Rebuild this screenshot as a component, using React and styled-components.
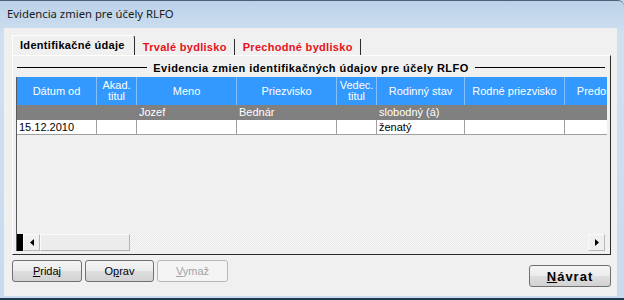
import styled, { createGlobalStyle } from 'styled-components'

const GlobalStyle = createGlobalStyle`
  html, body {
    margin: 0;
    padding: 0;
    background: #c6d9ec;
  }
  * { box-sizing: border-box; }
`

/* --- Window chrome --- */
const Window = styled.div`
  width: 624px;
  height: 300px;
  display: flex;
  flex-direction: column;
  background: linear-gradient(180deg, #bcd2e8 0%, #cfe0f1 12%, #c8dbee 100%);
  border-top: 1px solid #4b6276;
  border-bottom: 2px solid #1f3a4f;
  border-top-right-radius: 6px;
  overflow: hidden;
`

const TitleBar = styled.div`
  height: 27px;
  flex: none;
  display: flex;
  align-items: center;
  padding-left: 7px;
  padding-bottom: 3px;
  font-family: 'Noto Sans', 'DejaVu Sans', sans-serif;
  font-size: 11.3px;
  color: #1b1b1b;
`

const Frame = styled.div`
  flex: 1;
  min-height: 0;
  display: flex;
  padding: 0 7px 2px 4px;
`

const Client = styled.div`
  flex: 1;
  min-width: 0;
  display: flex;
  flex-direction: column;
  background: #f0f0f0;
  padding: 7px 6px 0 8px;
  font-family: 'Liberation Sans', Arial, sans-serif;
`

/* --- Tabs --- */
const TabStrip = styled.div`
  display: flex;
  height: 20px;
  align-items: flex-end;
`

const Tab = styled.div`
  height: ${(p) => (p.$active ? '20px' : '16px')};
  display: flex;
  align-items: center;
  padding: 0 ${(p) => (p.$active ? '9px' : '7px')} 0 ${(p) => (p.$active ? '7px' : '8px')};
  font-size: 11px;
  font-weight: bold;
  letter-spacing: 0.3px;
  color: ${(p) => (p.$active ? '#000' : '#e5121c')};
  border-right: 1px solid #2a2a2a;
  border-top-right-radius: ${(p) => (p.$active ? '3px' : '0')};
  ${(p) =>
    p.$active &&
    `
    border-top: 1px solid #ffffff;
    border-left: 1px solid #ffffff;
    padding-bottom: 2px;
  `}
`

const TabPanel = styled.div`
  height: 200px;
  min-width: 0;
  display: flex;
  flex-direction: column;
  padding: 2px 3px 3px 3px;
  border-top: 1px solid #ffffff;
  border-left: 1px solid #ffffff;
  border-right: 1px solid #2b2b2b;
  border-bottom: 1px solid #2b2b2b;
`

const GroupTitle = styled.div`
  height: 19px;
  display: flex;
  align-items: center;
  gap: 6px;
  padding: 0 2px 0 1px;
  font-size: 11px;
  font-weight: bold;
  letter-spacing: 0.45px;
  color: #000;

  &::before,
  &::after {
    content: '';
    flex: 1;
    height: 1px;
    background: #000;
  }
`

/* --- Grid --- */
const Grid = styled.div`
  flex: 1;
  min-width: 0;
  min-height: 0;
  display: flex;
  flex-direction: column;
  border-left: 1px solid #5a5a5a;
  background: #f0f0f0;
  overflow: hidden;
`

const GridRows = styled.div`
  flex: 1;
  min-height: 0;
  overflow: hidden;
`

const Row = styled.div`
  display: flex;
  width: max-content;
  height: ${(p) => p.$height || 15}px;
`

const HeaderCell = styled.div`
  flex: none;
  width: ${(p) => p.$w}px;
  display: flex;
  align-items: center;
  justify-content: center;
  text-align: center;
  background: #3399ff;
  color: #fff;
  font-size: 11px;
  line-height: 11px;
  border-right: 1px solid #86c1ff;
  white-space: pre;
  overflow: hidden;
`

const Cell = styled.div`
  flex: none;
  width: ${(p) => p.$w}px;
  padding-left: 2px;
  font-size: 11px;
  line-height: 14px;
  color: ${(p) => (p.$dark ? '#fff' : '#000')};
  background: ${(p) => (p.$dark ? '#808080' : '#fff')};
  border-right: 1px solid ${(p) => (p.$dark ? '#808080' : '#a0a0a0')};
  border-bottom: 1px solid ${(p) => (p.$dark ? '#808080' : '#a0a0a0')};
  white-space: nowrap;
  overflow: hidden;
`

/* --- Scrollbar --- */
const ScrollBar = styled.div`
  height: 17px;
  flex: none;
  display: flex;
  margin-right: 2px;
  background-color: #f4f4f4;
  background-image: repeating-conic-gradient(#e8e8e8 0% 25%, #f8f8f8 0% 50%);
  background-size: 2px 2px;
`

const Indicator = styled.div`
  width: 6px;
  flex: none;
  background: #000;
`

const ScrollButton = styled.div`
  width: 17px;
  flex: none;
  display: flex;
  align-items: center;
  justify-content: center;
  background: #f0f0f0;
  border: 1px solid #b8b8b8;
  border-left-color: #fafafa;
  border-top-color: #fafafa;

  svg { width: 4px; height: 7px; }
`

const Thumb = styled.div`
  width: 90px;
  flex: none;
  background: #ececec;
  border: 1px solid #b4b4b4;
  border-left-color: #fafafa;
  border-top-color: #fafafa;
`

const Track = styled.div`
  flex: 1;
`

/* --- Buttons --- */
const ButtonBar = styled.div`
  display: flex;
  align-items: flex-start;
  padding-top: 5px;
`

const LeftButtons = styled.div`
  display: flex;
  gap: 3px;
  flex: 1;
`

const Button = styled.div`
  width: ${(p) => p.$w || 70}px;
  height: 22px;
  margin-top: ${(p) => p.$offset || 0}px;
  display: flex;
  align-items: center;
  justify-content: center;
  border: 1px solid ${(p) => (p.$disabled ? '#b5b9bc' : '#707070')};
  border-radius: 3px;
  background: ${(p) =>
    p.$disabled
      ? '#f4f4f4'
      : 'linear-gradient(180deg, #f4f4f4 0%, #ececec 48%, #dedede 52%, #d2d2d2 100%)'};
  color: ${(p) => (p.$disabled ? '#a3a3a3' : '#000')};
  font-size: ${(p) => (p.$bold ? '13px' : '11px')};
  font-weight: ${(p) => (p.$bold ? 'bold' : 'normal')};
  letter-spacing: ${(p) => (p.$bold ? '1px' : '0')};

  u { text-decoration: underline; }
`

const columns = [
  { w: 80, title: 'Dátum od' },
  { w: 40, title: 'Akad.\ntitul' },
  { w: 100, title: 'Meno' },
  { w: 100, title: 'Priezvisko' },
  { w: 40, title: 'Vedec.\ntitul' },
  { w: 88, title: 'Rodinný stav' },
  { w: 100, title: 'Rodné priezvisko' },
  { w: 120, title: 'Predošlé priezvisko' },
]

const rows = [
  { dark: true, values: ['', '', 'Jozef', 'Bednár', '', 'slobodný (á)', '', ''] },
  { dark: false, values: ['15.12.2010', '', '', '', '', 'ženatý', '', ''] },
]

const Arrow = ({ dir }) => (
  <svg viewBox="0 0 4 7">
    <path d={dir === 'left' ? 'M4 0 L0 3.5 L4 7 Z' : 'M0 0 L4 3.5 L0 7 Z'} fill="#000" />
  </svg>
)

export default function App() {
  return (
    <>
      <GlobalStyle />
      <Window>
        <TitleBar>Evidencia zmien pre účely RLFO</TitleBar>
        <Frame>
          <Client>
            <TabStrip>
              <Tab $active>Identifikačné údaje</Tab>
              <Tab>Trvalé bydlisko</Tab>
              <Tab>Prechodné bydlisko</Tab>
            </TabStrip>
            <TabPanel>
              <GroupTitle>Evidencia zmien identifikačných údajov pre účely RLFO</GroupTitle>
              <Grid>
                <GridRows>
                  <Row $height={28}>
                    {columns.map((c) => (
                      <HeaderCell key={c.title} $w={c.w}>
                        {c.title}
                      </HeaderCell>
                    ))}
                  </Row>
                  {rows.map((r, i) => (
                    <Row key={i}>
                      {r.values.map((v, j) => (
                        <Cell key={j} $w={columns[j].w} $dark={r.dark}>
                          {v}
                        </Cell>
                      ))}
                    </Row>
                  ))}
                </GridRows>
                <ScrollBar>
                  <Indicator />
                  <ScrollButton>
                    <Arrow dir="left" />
                  </ScrollButton>
                  <Thumb />
                  <Track />
                  <ScrollButton>
                    <Arrow dir="right" />
                  </ScrollButton>
                </ScrollBar>
              </Grid>
            </TabPanel>
            <ButtonBar>
              <LeftButtons>
                <Button>
                  <span><u>P</u>ridaj</span>
                </Button>
                <Button $w={69}>
                  <span>O<u>p</u>rav</span>
                </Button>
                <Button $w={71} $disabled>
                  <span><u>V</u>ymaž</span>
                </Button>
              </LeftButtons>
              <Button $w={82} $offset={5} $bold>
                <span><u>N</u>ávrat</span>
              </Button>
            </ButtonBar>
          </Client>
        </Frame>
      </Window>
    </>
  )
}
